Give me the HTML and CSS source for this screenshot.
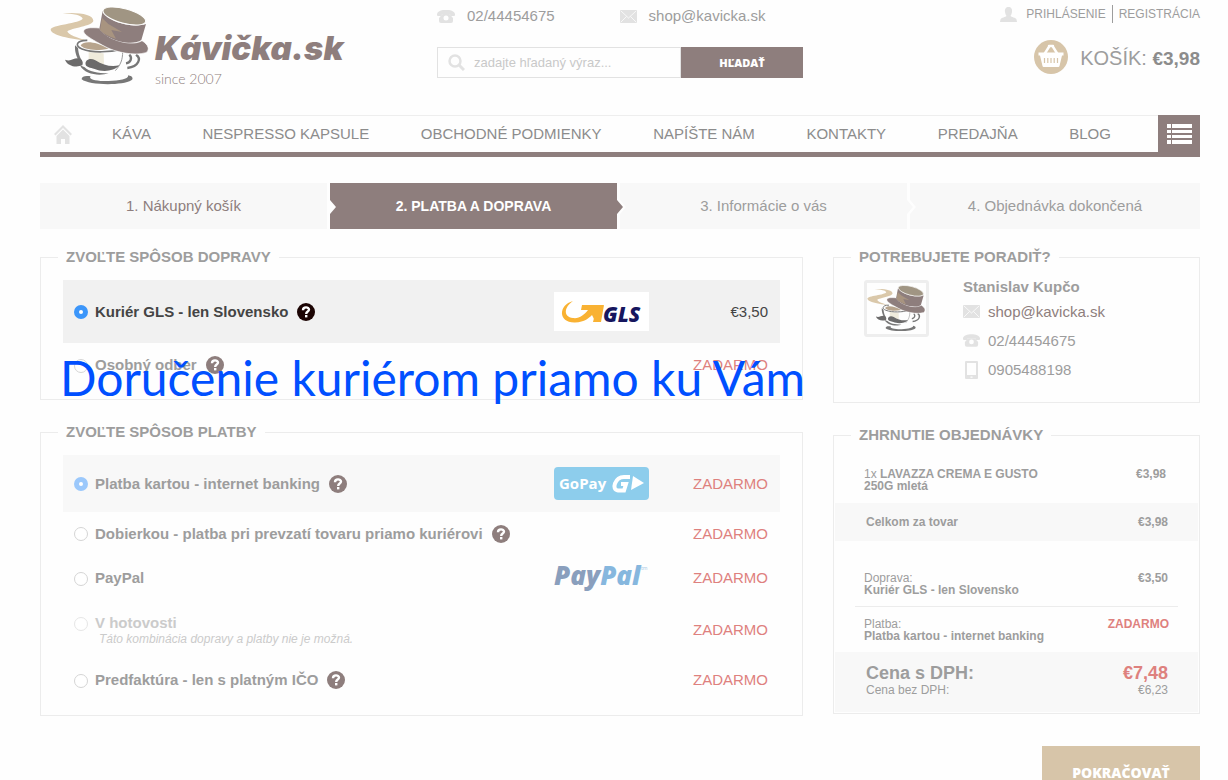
FILE: index.html
```html
<!DOCTYPE html>
<html lang="sk">
<head>
	<meta charset="utf-8">
	<title>Kávička.sk - Platba a doprava</title>
	<link rel="stylesheet" href="styles.css">
</head>
<body>
	<svg class="sprite" aria-hidden="true">
		<symbol id="cup" viewBox="30 20 300 240">
			<path fill="#dac8aa" d="M68 42C118 38 160 46 160 64C159 80 92 86 82 96C84 106 112 116 142 124C92 118 34 108 32 91C32 76 122 72 128 58C126 48 100 43 68 42Z"/>
			<path fill="#b7a48d" d="M122 138C132 124 166 126 206 148C164 156 128 150 122 138Z"/>
			<path fill="#efebdc" d="M146 158L191 162L192 196L160 184L146 182Z"/>
			<path fill="none" stroke="#777" stroke-width="5" d="M142 123C110 122 102 140 126 149C160 162 212 158 244 150"/>
			<path fill="#777" d="M105 138L114 146C116 166 120 174 126 184L120 188C108 172 104 156 105 138ZM120 198L134 204C146 216 172 222 206 222C182 230 134 228 120 198Z"/>
			<path fill="none" stroke="#777" stroke-width="7" d="M288 166C304 176 298 202 262 206M268 166C278 176 272 190 258 192"/>
			<path fill="none" stroke="#999" stroke-width="3" d="M248 156C248 182 242 196 226 214"/>
			<path fill="#777" d="M125 240C124 230 138 228 152 231C142 240 176 246 206 245C240 244 268 238 264 228C276 229 282 238 274 243C246 260 146 258 125 240Z"/>
			<path fill="#6c6b6b" d="M75 181C92 188 98 177 113 177C126 178 131 188 127 198C108 206 82 200 75 181ZM137 196C134 182 150 174 166 183C190 198 214 204 238 198C222 218 184 218 164 209C150 204 140 204 137 196Z"/>
			<path fill="#8e7e7d" stroke="#fefefe" stroke-width="2" d="M131 98C130 84 152 84 178 86C196 120 274 144 306 124C326 136 330 152 318 160C282 170 226 160 188 138C164 124 138 112 131 98Z"/>
			<path fill="#8e7e7d" d="M188 34L178 88C196 122 276 142 304 122L318 74C276 88 202 66 188 34Z"/>
			<path fill="#a89480" d="M186 56L205 74L246 98L214 92L228 118C206 112 190 104 180 92Z"/>
			<ellipse fill="#a09583" stroke="#fefefe" stroke-width="3" cx="253" cy="50" rx="66" ry="22" transform="rotate(15 253 50)"/>
		</symbol>
		<symbol id="phone" viewBox="0 0 18 13">
			<path d="M0 5C-1-2 19-2 18 5Q18 6 17 6H14Q13 6 13 4H5Q5 6 4 6H1Q0 6 0 5Z"/>
			<path d="M5.500 4H12.500L16 8V11Q16 13 14 13H4Q2 13 2 11V8Z"/>
			<circle cx="9" cy="8" r="2.500" fill="#fefefe"/>
		</symbol>
		<symbol id="mail" viewBox="0 0 17 13">
			<rect width="17" height="13" rx="1"/>
			<path fill="none" stroke="#fefefe" stroke-width=".8" d="M1 1L8.500 8L16 1M1 12L6.500 6.500M16 12L10.500 6.500"/>
		</symbol>
		<symbol id="mobile" viewBox="0 0 13 18">
			<path fill-rule="evenodd" d="M1 0H12Q13 0 13 1V17Q13 18 12 18H1Q0 18 0 17V1Q0 0 1 0ZM2 2V14H11V2ZM5.500 15.500V16.800H7.500V15.500Z"/>
		</symbol>
		<symbol id="help" viewBox="0 0 18 18">
			<circle cx="9" cy="9" r="9"/>
			<path fill="none" stroke="#fff" stroke-width="2.400" d="M6 7.200C6 3.400 12 3.600 12 6.600C12 8.800 9.200 8.400 9.200 11"/>
			<rect x="8" y="12" width="2.400" height="2.400" fill="#fff"/>
		</symbol>
	</svg>

	<div class="page">
		<header class="header">
			<a class="logo" href="#">
				<svg class="logo-cup"><use href="#cup"/></svg>
				<span class="logo-text">
					<strong>Kávička.sk</strong>
					<small>since 2007</small>
				</span>
			</a>
			<div class="header-middle">
				<div class="header-contacts">
					<span><svg class="icon" width="18" height="13"><use href="#phone"/></svg>02/44454675</span>
					<a href="#"><svg class="icon" width="17" height="13"><use href="#mail"/></svg>shop@kavicka.sk</a>
				</div>
				<form class="search">
					<label class="search-field">
						<svg class="icon" width="17" height="17" viewBox="0 0 17 17"><circle cx="7" cy="7" r="5.500" fill="none" stroke="#e2e2e2" stroke-width="2.500"/><path d="M11 11L16 16" stroke="#e2e2e2" stroke-width="3"/></svg>
						<input type="text" placeholder="zadajte hľadaný výraz..." aria-label="Hľadať">
					</label>
					<button type="button">HĽADAŤ</button>
				</form>
			</div>
			<div class="header-right">
				<div class="account">
					<svg class="icon" width="17" height="15" viewBox="0 0 17 15"><path d="M8.500 0C11 0 12.500 2 12 5C11.700 7 11 8 10.500 9C11 10 16 10.500 16.500 12.500L17 15H0L.5 12.500C1 10.500 6 10 6.500 9C6 8 5.300 7 5 5C4.500 2 6 0 8.500 0Z"/></svg>
					<a href="#">PRIHLÁSENIE</a>
					<a class="register" href="#">REGISTRÁCIA</a>
				</div>
				<a class="basket" href="#">
					<svg width="34" height="34" viewBox="0 0 34 34"><circle cx="17" cy="17" r="17" fill="#d7c5a9"/><path fill="none" stroke="#fff" stroke-width="2.400" stroke-linecap="round" d="M10.500 14L15.500 6M23.500 14L18.500 6M15 6H19"/><path fill="#fff" d="M4.500 12.500H29.500V15.500H28L25.500 26Q25.300 27 24.300 27H9.700Q8.700 27 8.500 26L6 15.500H4.500Z"/><path stroke="#d7c5a9" stroke-width="1.200" d="M10.500 18V23M13.800 18V23M17 18V23M20.200 18V23M23.500 18V23"/></svg>
					<span>KOŠÍK: <strong>€3,98</strong></span>
				</a>
			</div>
		</header>

		<nav class="nav">
			<a class="nav-home" href="#" aria-label="Domov"><svg class="icon" width="18" height="19" viewBox="0 0 18 19"><path d="M9 0L18 9L16.500 10.500L9 3L1.500 10.500L0 9Z"/><path d="M9 4.500L15.500 11V19H11V14H7V19H2.500V11Z"/></svg></a>
			<div class="nav-links">
				<a href="#">KÁVA</a>
				<a href="#">NESPRESSO KAPSULE</a>
				<a href="#">OBCHODNÉ PODMIENKY</a>
				<a href="#">NAPÍŠTE NÁM</a>
				<a href="#">KONTAKTY</a>
				<a href="#">PREDAJŇA</a>
				<a href="#">BLOG</a>
			</div>
			<button class="nav-menu" type="button" aria-label="Menu"><svg width="25" height="20" viewBox="0 0 25 20"><path fill="#fff" d="M0 0H4V4H0ZM5 0H25V4H5ZM0 6H4V9H0ZM5 6H25V9H5ZM0 11H4V14H0ZM5 11H25V14H5ZM0 16H4V20H0ZM5 16H25V20H5Z"/></svg></button>
		</nav>

		<ol class="steps">
			<li class="done">1. Nákupný košík</li>
			<li class="active">2. PLATBA A DOPRAVA</li>
			<li>3. Informácie o vás</li>
			<li>4. Objednávka dokončená</li>
		</ol>

		<div class="columns">
			<main>
				<fieldset class="box shipping">
					<legend>ZVOĽTE SPÔSOB DOPRAVY</legend>
					<div class="option highlighted">
						<input type="radio" name="shipping" id="gls" checked>
						<label for="gls">Kuriér GLS - len Slovensko</label>
						<button class="help" type="button" aria-label="Viac"><svg width="18" height="18"><use href="#help"/></svg></button>
						<svg class="brand" width="95" height="39" viewBox="0 0 95 39">
							<rect width="95" height="39" fill="#fff"/>
							<path fill="#f9b233" d="M19 9C4 13 4 31 21 30.500C31 30 35 26 38 23L41 29L50 13H28L27 18H34C30 23 25 27 19 26C9 25 10 15 19 9Z"/>
							<path fill="#f9b233" d="M41 22L50 13L47 30H39Z"/>
							<text x="49" y="30" class="gls-text">GLS</text>
						</svg>
						<span class="price">€3,50</span>
					</div>
					<div class="option pickup">
						<input type="radio" name="shipping" id="pickup">
						<label for="pickup">Osobný odber</label>
						<button class="help" type="button" aria-label="Viac"><svg width="18" height="18"><use href="#help"/></svg></button>
						<span class="price free">ZADARMO</span>
					</div>
					<p class="callout">Doručenie kuriérom priamo ku Vám</p>
				</fieldset>

				<fieldset class="box payment">
					<legend>ZVOĽTE SPÔSOB PLATBY</legend>
					<div class="option selected">
						<input type="radio" name="payment" id="card" checked>
						<label for="card">Platba kartou - internet banking</label>
						<button class="help" type="button" aria-label="Viac"><svg width="18" height="18"><use href="#help"/></svg></button>
						<svg class="brand" width="95" height="33" viewBox="0 0 95 33">
							<rect width="95" height="33" rx="4" fill="#8dcdec"/>
							<text x="5" y="22" class="gopay-text">GoPay</text>
							<path fill="none" stroke="#fff" stroke-width="4" d="M76 10H70C61 10 57 23 64 23.500H70L72 17H67"/>
							<path fill="#fff" d="M79 9L90 16L77 23Z"/>
						</svg>
						<span class="price free">ZADARMO</span>
					</div>
					<div class="option">
						<input type="radio" name="payment" id="cod">
						<label for="cod">Dobierkou - platba pri prevzatí tovaru priamo kuriérovi</label>
						<button class="help" type="button" aria-label="Viac"><svg width="18" height="18"><use href="#help"/></svg></button>
						<span class="price free">ZADARMO</span>
					</div>
					<div class="option">
						<input type="radio" name="payment" id="paypal">
						<label for="paypal">PayPal</label>
						<svg class="brand" width="95" height="42" viewBox="0 0 95 42">
							<text x="0" y="28" class="paypal-text">Pay<tspan fill="#86b7de">Pal</tspan></text>
							<text x="87" y="13" class="paypal-tm">tm</text>
						</svg>
						<span class="price free">ZADARMO</span>
					</div>
					<div class="option disabled">
						<input type="radio" name="payment" id="cash" disabled>
						<label for="cash">V hotovosti <em>Táto kombinácia dopravy a platby nie je možná.</em></label>
						<span class="price free">ZADARMO</span>
					</div>
					<div class="option">
						<input type="radio" name="payment" id="invoice">
						<label for="invoice">Predfaktúra - len s platným IČO</label>
						<button class="help" type="button" aria-label="Viac"><svg width="18" height="18"><use href="#help"/></svg></button>
						<span class="price free">ZADARMO</span>
					</div>
				</fieldset>
			</main>

			<aside>
				<section class="box advice">
					<h2>POTREBUJETE PORADIŤ?</h2>
					<div class="advice-photo"><svg><use href="#cup"/></svg></div>
					<ul class="advice-contacts">
						<li><strong>Stanislav Kupčo</strong></li>
						<li><svg class="icon" width="17" height="13"><use href="#mail"/></svg><a href="#">shop@kavicka.sk</a></li>
						<li><svg class="icon" width="17" height="13"><use href="#phone"/></svg>02/44454675</li>
						<li><svg class="icon" width="17" height="18"><use href="#mobile"/></svg>0905488198</li>
					</ul>
				</section>

				<section class="box summary">
					<h2>ZHRNUTIE OBJEDNÁVKY</h2>
					<dl>
						<div class="item">
							<dt>1x <strong>LAVAZZA CREMA E GUSTO<br>250G mletá</strong></dt>
							<dd>€3,98</dd>
						</div>
						<div class="band">
							<dt><strong>Celkom za tovar</strong></dt>
							<dd>€3,98</dd>
						</div>
						<div class="delivery">
							<dt>Doprava:<br><strong>Kuriér GLS - len Slovensko</strong></dt>
							<dd>€3,50</dd>
						</div>
						<div class="paid-by">
							<dt>Platba:<br><strong>Platba kartou - internet banking</strong></dt>
							<dd class="free">ZADARMO</dd>
						</div>
						<div class="band total">
							<dt><strong>Cena s DPH:</strong>Cena bez DPH:</dt>
							<dd><strong>€7,48</strong>€6,23</dd>
						</div>
					</dl>
				</section>

				<button class="continue" type="button">POKRAČOVAŤ</button>
			</aside>
		</div>
	</div>
</body>
</html>
```

FILE: styles.css
```css
* {
	box-sizing: border-box;
}
body {
	margin: 0;
	background: #fefefe;
	color: #9d9d9d;
	font: 15px/18px "Liberation Sans", Arial, sans-serif;
}
a {
	color: inherit;
	text-decoration: none;
}
button {
	border: 0;
	padding: 0;
	font: inherit;
	cursor: pointer;
}
svg {
	display: block;
	flex: none;
}
.sprite {
	display: none;
}
.icon {
	fill: #e2e2e2;
}
.page {
	padding: 0 28px 0 40px;
}

/* header */
.header {
	display: grid;
	grid-template-columns: 397fr 366fr 397fr;
	height: 115px;
}
.logo {
	display: flex;
	gap: 5px;
	padding: 6px 0 0 10px;
}
.logo-cup {
	width: 100px;
	height: 80px;
}
.logo-text {
	display: flex;
	flex-direction: column;
	padding-top: 22px;
	color: #8e7e7d;
}
.logo-text strong {
	font: italic 900 33px/40px Inter, sans-serif;
}
.logo-text small {
	font: 300 14px/22px Lato, sans-serif;
}
.header-contacts {
	display: flex;
	gap: 65px;
	padding-top: 7px;
}
.header-contacts > * {
	display: flex;
	align-items: center;
	gap: 12px;
}
.search {
	display: flex;
	height: 31px;
	margin-top: 22px;
}
.search-field {
	display: flex;
	flex: 1;
	align-items: center;
	gap: 9px;
	padding-left: 10px;
	border: 1px solid #e2e2e2;
}
.search input {
	width: 100%;
	border: 0;
	padding: 0;
	background: none;
	font: 13px "Liberation Sans", Arial, sans-serif;
}
.search input::placeholder {
	color: #c9c9c9;
}
.search button {
	width: 122px;
	background: #8e7e7d;
	color: #fff;
	font: 800 11px "Open Sans", sans-serif;
}
.account {
	display: flex;
	justify-content: flex-end;
	align-items: center;
	padding-top: 5px;
	font-size: 12px;
}
.account .icon {
	margin-right: 9px;
}
.register {
	margin-left: 6px;
	border-left: 1px solid #9d9d9d;
	padding-left: 6px;
}
.basket {
	display: flex;
	justify-content: flex-end;
	align-items: center;
	gap: 12px;
	margin-top: 15px;
	font-size: 20px;
	line-height: 32px;
}
.basket span {
	padding-top: 4px;
}
.basket strong {
	color: #8c8c8c;
	font-size: 19px;
}

/* main menu */
.nav {
	display: flex;
	align-items: center;
	height: 42px;
	border-top: 1px solid #eee;
	border-bottom: 5px solid #8e7e7d;
	color: #8c8c8c;
}
.nav-home {
	padding: 0 40px 0 14px;
}
.nav-links {
	display: flex;
	flex: 1;
	justify-content: space-between;
	padding-right: 47px;
}
.nav-menu {
	display: grid;
	place-items: center;
	width: 42px;
	height: 38px;
	background: #8e7e7d;
}

/* checkout steps */
.steps {
	display: grid;
	grid-template-columns: repeat(3, 287fr) 290fr;
	gap: 3px;
	margin: 26px 0 0;
	padding: 0;
	list-style: none;
	line-height: 46px;
	text-align: center;
}
.steps li {
	position: relative;
	background: #f8f8f8;
}
.steps .done {
	color: #8e7e7d;
}
.steps .active {
	background: #8e7e7d;
	color: #fff;
	font-size: 14px;
	font-weight: bold;
}
.steps li:not(:last-child)::before,
.steps li:not(:last-child)::after {
	content: "";
	position: absolute;
	z-index: 1;
	top: 17px;
	left: 100%;
	border: 7px solid transparent;
	border-right: 0;
	border-left: 6px solid #f8f8f8;
}
.steps li:not(:last-child)::before {
	margin-left: 3px;
	border-left-color: #fefefe;
}
.steps li.done::after {
	border-left-color: #fefefe;
}
.steps li.active::after {
	border-left-color: #8e7e7d;
}

/* boxes */
.columns {
	display: grid;
	grid-template-columns: 763fr 367fr;
	gap: 30px;
	margin-top: 19px;
}
.box {
	position: relative;
	min-width: 0;
	margin: 0;
	border: 1px solid #ececec;
}
.box legend,
.box h2 {
	margin: 0;
	padding: 0 8px;
	font-size: 15px;
	line-height: 18px;
	font-weight: bold;
}
fieldset.box {
	padding: 14px 22px 12px;
}
fieldset.box legend {
	margin-left: -5px;
}
section.box {
	margin-top: 9px;
}
.box h2 {
	position: absolute;
	top: -10px;
	left: 17px;
	background: #fefefe;
}
.box.payment {
	margin-top: 23px;
}

/* shipping and payment options */
.option {
	display: flex;
	align-items: center;
	min-height: 46px;
	padding: 0 12px 0 11px;
}
.option.highlighted {
	min-height: 63px;
	background: #f1f1f1;
	color: #444;
}
.option.selected {
	min-height: 57px;
	background: #f8f8f8;
}
.option.pickup {
	min-height: 44px;
}
.selected + .option {
	min-height: 43px;
}
.option.disabled {
	min-height: 56px;
	padding-top: 2px;
}
.option input {
	appearance: none;
	flex: none;
	width: 14px;
	height: 14px;
	margin: 1px 7px 0 0;
	border: 1px solid #d5d5d5;
	border-radius: 50%;
	background: #fff;
}
.option input:checked {
	border: 5px solid #9bc8fb;
}
.option.highlighted input:checked {
	border-color: #3c96fa;
}
.option label {
	font-weight: bold;
}
.help {
	margin-left: 9px;
	background: none;
	fill: #8e7e7d;
}
.highlighted .help {
	fill: #1c0504;
}
.price {
	width: 119px;
	margin-left: auto;
	text-align: right;
}
.brand {
	margin-left: auto;
}
.brand + .price {
	margin-left: 0;
}
.free {
	color: #de817e;
}
.disabled label {
	color: #cbcbcb;
}
.option.disabled input {
	align-self: flex-start;
	margin-top: 14px;
	border-color: #e6e6e6;
}
.disabled em {
	display: block;
	padding-left: 4px;
	font-size: 12px;
	line-height: 14px;
	font-weight: normal;
}
.gls-text {
	fill: #16165e;
	font: italic 800 21px "Open Sans", sans-serif;
}
.gopay-text {
	fill: #fff;
	font: 700 15px "Open Sans", sans-serif;
}
.paypal-text {
	fill: #8a9fbd;
	font: italic 800 26px "Open Sans", sans-serif;
}
.paypal-tm {
	fill: #a9cbe6;
	font: 5px "Noto Sans", sans-serif;
}

/* note laid over the form */
.callout {
	position: absolute;
	top: 83px;
	left: 19px;
	margin: 0;
	color: #004fff;
	font: 48px/58px Lato, sans-serif;
	white-space: nowrap;
}

/* sidebar */
.advice {
	display: flex;
	gap: 34px;
	padding: 22px 30px 18px;
}
.advice-photo {
	align-self: flex-start;
	border: 3px solid #eee;
	border-radius: 3px;
}
.advice-photo svg {
	width: 59px;
	height: 51px;
}
.advice-contacts {
	margin: 0;
	padding: 0;
	list-style: none;
}
.advice-contacts li {
	display: flex;
	align-items: center;
	gap: 8px;
	height: 29px;
}
.advice-contacts li:first-child {
	align-items: flex-start;
	height: 17px;
	line-height: 14px;
}
.advice-contacts a {
	color: #8e7e7d;
}
.box.summary {
	margin-top: 32px;
	padding: 1px;
}
.summary dl {
	margin: 0;
	font-size: 12px;
	line-height: 12px;
}
.summary dl > div {
	display: flex;
	justify-content: space-between;
	padding: 0 30px 0 29px;
}
.summary dd {
	margin: 0;
	font-weight: bold;
	text-align: right;
}
.summary dl > .item {
	padding: 31px 32px 11px 29px;
}
.summary dl > .band {
	padding: 13px 30px 13px 31px;
	background: #f8f8f8;
}
.summary dl > .delivery {
	padding-top: 31px;
	padding-bottom: 10px;
}
.summary dl > .paid-by {
	margin: 0 20px;
	border-top: 1px solid #ececec;
	padding: 11px 9px 10px;
}
.summary dl > .total {
	padding-top: 11px;
	padding-bottom: 15px;
	line-height: 14px;
}
.total strong {
	display: block;
	font-size: 18px;
	line-height: 20px;
}
.total dd {
	font-weight: normal;
}
.total dd strong {
	color: #de817e;
}
.continue {
	display: block;
	width: 158px;
	height: 52px;
	margin: 32px 0 0 auto;
	background: #d7c5a9;
	color: #fff;
	font: 800 14px "Open Sans", sans-serif;
}
```
